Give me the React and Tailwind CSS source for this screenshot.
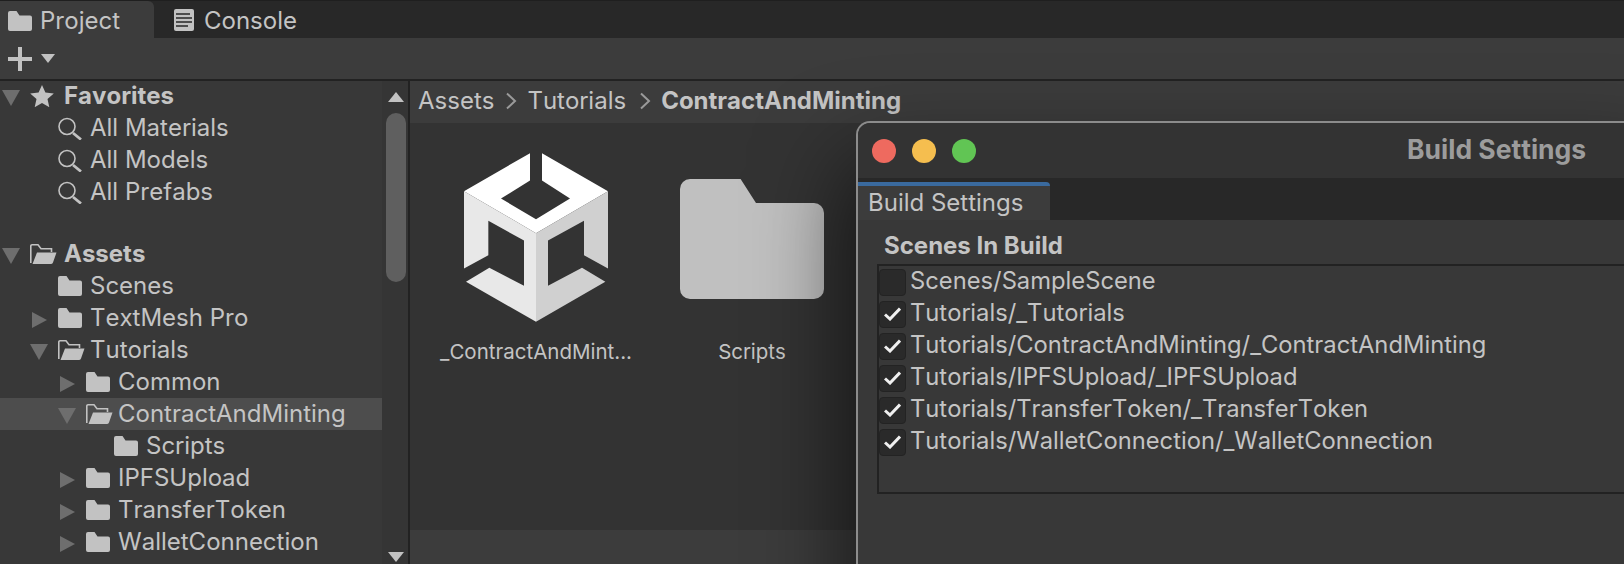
const Folder = ({ className = 'w-6 h-5' }) => (
  <svg viewBox="0 0 24 20" className={`${className} shrink-0`}>
    <path d="M2 0h6.5l3 4.5H22a2 2 0 0 1 2 2V18a2 2 0 0 1-2 2H2a2 2 0 0 1-2-2V2a2 2 0 0 1 2-2z" fill="#c2c2c2" />
  </svg>
);

const OpenFolder = () => (
  <svg viewBox="0 0 27 20" className="w-[27px] h-5 shrink-0">
    <path d="M.8 19V2A1.2 1.2 0 0 1 2 .8h6l3 4h10.5V8" fill="none" stroke="#c2c2c2" strokeWidth="1.6" />
    <path d="M7 8.5h19.5L23 18.5a2 2 0 0 1-2 1.5H2.5z" fill="#c2c2c2" />
  </svg>
);

const Arrow = ({ open }) => (
  <svg viewBox="0 0 18 16" className="w-[18px] h-4 shrink-0 mt-[3px]">
    {open
      ? <path d="M0 0h18L9 16z" fill="#6e6e6e" />
      : <path d="M2 0l15 8-15 8z" fill="#6e6e6e" />}
  </svg>
);

const SearchIcon = () => (
  <svg viewBox="0 0 24 24" className="w-6 h-6 shrink-0" fill="none" stroke="#c2c2c2">
    <circle cx="9" cy="10.5" r="8" strokeWidth="1.6" />
    <path d="M15 17l8 6.5" strokeWidth="2.8" />
  </svg>
);

const TreeRow = ({ level, label, arrow, open, selected, bold, icon }) => (
  <div
    className={`h-8 flex items-center shrink-0 relative ${selected ? 'bg-[#4d4d4d]' : ''} ${bold ? 'font-bold' : ''}`}
    style={{ paddingLeft: 2 + level * 28 }}
  >
    <div className="w-7 shrink-0 flex items-center">{arrow !== undefined && <Arrow open={arrow === 'open'} />}</div>
    <div className="w-[33px] shrink-0 flex items-center">{icon || (open ? <OpenFolder /> : <Folder />)}</div>
    <span className={`whitespace-nowrap ${bold ? 'ml-px' : '-ml-px'}`}>{label}</span>
  </div>
);

const Star = () => (
  <svg viewBox="0 0 24 22" className="w-6 h-[22px] shrink-0">
    <path d="M12 0l3.4 7.6 8.4.9-6.3 5.6 1.8 8.1L12 18l-7.3 4.2 1.8-8.1L.2 8.5l8.4-.9z" fill="#c2c2c2" />
  </svg>
);

const Chevron = ({ className }) => (
  <svg viewBox="0 0 12 18" className={`w-3 h-[18px] shrink-0 ${className}`} fill="none" stroke="#9a9a9a" strokeWidth="2">
    <path d="M2 1.5l8 7.5-8 7.5" />
  </svg>
);

const UnityLogo = () => (
  <svg viewBox="132 102 432 506" className="w-36 h-[169px]">
    <path d="M330 102v82l-87 54 105 62 102-62-84-54v-82l198 114-216 126-216-126z" fill="#ffffff" />
    <path d="M132 216l216 126v266L138 488l70-42 104 54V364l-107-59v103l-73 40z" fill="#e8e8e8" />
    <path d="M564 216v232l-72-40V305l-108 59v136l102-54 70 42-208 120V342z" fill="#d0d0d0" />
  </svg>
);

const BigFolder = () => (
  <svg viewBox="0 0 144 120" className="w-36 h-[120px]">
    <path d="M10 0h50.6L76 24h58a10 10 0 0 1 10 10v76a10 10 0 0 1-10 10H10a10 10 0 0 1-10-10V10A10 10 0 0 1 10 0z" fill="#c0c0c0" />
  </svg>
);

const scenes = [
  ['Scenes/SampleScene', false],
  ['Tutorials/_Tutorials', true],
  ['Tutorials/ContractAndMinting/_ContractAndMinting', true],
  ['Tutorials/IPFSUpload/_IPFSUpload', true],
  ['Tutorials/TransferToken/_TransferToken', true],
  ['Tutorials/WalletConnection/_WalletConnection', true],
];

export default function App() {
  return (
    <div className="w-[1624px] h-[564px] relative overflow-hidden flex flex-col bg-[#383838] text-[#c4c4c4] text-[24px] leading-8 [font-kerning:none] font-['Inter',sans-serif]">
      {/* tabs */}
      <div className="h-[38px] shrink-0 bg-[#282828] border-t border-[#1f1f1f] flex items-stretch">
        <div className="w-[154px] bg-[#3c3c3c] rounded-tr-md flex items-center pl-2 pt-[3px] gap-2">
          <Folder />
          <span>Project</span>
        </div>
        <div className="flex items-center pl-5 pt-[3px] gap-2.5">
          <svg viewBox="0 0 20 22" className="w-5 h-[22px] -mt-0.5">
            <rect width="20" height="22" rx="2" fill="#c2c2c2" />
            <path d="M2 5h14M2 9h16M2 13h16M2 17h12" stroke="#282828" strokeWidth="1.6" />
          </svg>
          <span>Console</span>
        </div>
      </div>

      {/* toolbar */}
      <div className="h-[43px] shrink-0 bg-[#3c3c3c] border-b-2 border-[#222222] flex items-center pl-2 gap-[9px]">
        <svg viewBox="0 0 24 24" className="w-6 h-6">
          <path d="M0 12h24M12 0v24" stroke="#c2c2c2" strokeWidth="4" />
        </svg>
        <svg viewBox="0 0 14 9" className="w-3.5 h-[9px]">
          <path d="M0 0h14L7 9z" fill="#c2c2c2" />
        </svg>
      </div>

      <div className="flex-1 flex min-h-0">
        {/* tree panel */}
        <div className="w-[382px] shrink-0 flex flex-col overflow-hidden -mt-px">
          <TreeRow level={0} label="Favorites" arrow="open" bold icon={<Star />} />
          <TreeRow level={1} label="All Materials" icon={<SearchIcon />} />
          <TreeRow level={1} label="All Models" icon={<SearchIcon />} />
          <TreeRow level={1} label="All Prefabs" icon={<SearchIcon />} />
          <div className="h-[30px] shrink-0" />
          <TreeRow level={0} label="Assets" arrow="open" bold open />
          <TreeRow level={1} label="Scenes" />
          <TreeRow level={1} label="TextMesh Pro" arrow="closed" />
          <TreeRow level={1} label="Tutorials" arrow="open" open />
          <TreeRow level={2} label="Common" arrow="closed" />
          <TreeRow level={2} label="ContractAndMinting" arrow="open" open selected />
          <TreeRow level={3} label="Scripts" />
          <TreeRow level={2} label="IPFSUpload" arrow="closed" />
          <TreeRow level={2} label="TransferToken" arrow="closed" />
          <TreeRow level={2} label="WalletConnection" arrow="closed" />
        </div>

        {/* scrollbar */}
        <div className="w-[26px] shrink-0 bg-[#353535] flex flex-col items-center pl-px">
          <svg viewBox="0 0 16 10" className="w-4 h-2.5 mt-[11px] shrink-0">
            <path d="M8 0l8 10H0z" fill="#c2c2c2" />
          </svg>
          <div className="w-5 h-[169px] mt-[11px] rounded-full bg-[#5f5f5f] shrink-0" />
          <svg viewBox="0 0 16 10" className="w-4 h-2.5 mt-auto mb-0.5 shrink-0">
            <path d="M0 0h16L8 10z" fill="#c2c2c2" />
          </svg>
        </div>
        <div className="w-0.5 shrink-0 bg-[#222222]" />

        {/* assets panel */}
        <div className="flex-1 flex flex-col min-w-0">
          <div className="h-[42px] shrink-0 bg-[#3c3c3c] flex items-center pl-2 pb-0.5">
            <span>Assets</span>
            <Chevron className="ml-[11px]" />
            <span className="ml-2.5">Tutorials</span>
            <Chevron className="ml-[13px]" />
            <span className="ml-2.5 font-bold">ContractAndMinting</span>
          </div>
          <div className="flex-1 bg-[#333333] flex items-start pl-[54px] pt-[30px] gap-[72px] text-[20.5px]">
            <div className="w-36 flex flex-col items-center">
              <UnityLogo />
              <span className="mt-3.5 whitespace-nowrap">_ContractAndMint...</span>
            </div>
            <div className="w-36 flex flex-col items-center">
              <div className="h-[169px] pt-[26px]"><BigFolder /></div>
              <span className="mt-3.5">Scripts</span>
            </div>
          </div>
          <div className="h-[34px] shrink-0 bg-[#3c3c3c]" />
        </div>
      </div>

      {/* Build Settings window */}
      <div className="absolute left-[856px] top-[121px] w-[800px] h-[500px] rounded-tl-[14px] border-t-2 border-l-2 border-[#8c8c8c] bg-[#383838] shadow-[0_50px_90px_10px_rgba(0,0,0,0.6)] flex flex-col overflow-hidden">
        <div className="h-[55px] shrink-0 bg-[#333333] relative flex items-center pl-[14px] gap-4">
          <div className="w-6 h-6 rounded-full bg-[#ee6a5f]" />
          <div className="w-6 h-6 rounded-full bg-[#f5be4f]" />
          <div className="w-6 h-6 rounded-full bg-[#61c554]" />
          <span className="absolute left-[549px] top-[10px] font-bold text-[#9c9c9c] text-[26.5px]">Build Settings</span>
        </div>
        <div className="h-[42px] shrink-0 bg-[#282828] flex items-end">
          <div className="w-[192px] h-[38px] bg-[#3c3c3c] border-t-4 border-[#3a6a9e] rounded-tr-sm pl-2.5 flex items-center">Build Settings</div>
        </div>
        <div className="pl-[19px] pt-2.5 flex-1">
          <div className="font-bold pl-[7px] h-8 flex items-center">Scenes In Build</div>
          <div className="mt-0.5 h-[230px] border-y-2 border-l-2 border-[#222222] text-[23.75px]">
            {scenes.map(([name, checked]) => (
              <div key={name} className="h-8 flex items-center">
                <div className="w-[27px] h-[27px] rounded-[4px] bg-[#2a2a2a] border border-[#232323] flex items-center justify-center shrink-0">
                  {checked && (
                    <svg viewBox="0 0 17 14" className="w-[17px] h-3.5" fill="none" stroke="#f0f0f0" strokeWidth="3">
                      <path d="M1 7.5l5 4.5L16 1.5" />
                    </svg>
                  )}
                </div>
                <span className="ml-1 pb-0.5 whitespace-nowrap">{name}</span>
              </div>
            ))}
          </div>
        </div>
      </div>
    </div>
  );
}
